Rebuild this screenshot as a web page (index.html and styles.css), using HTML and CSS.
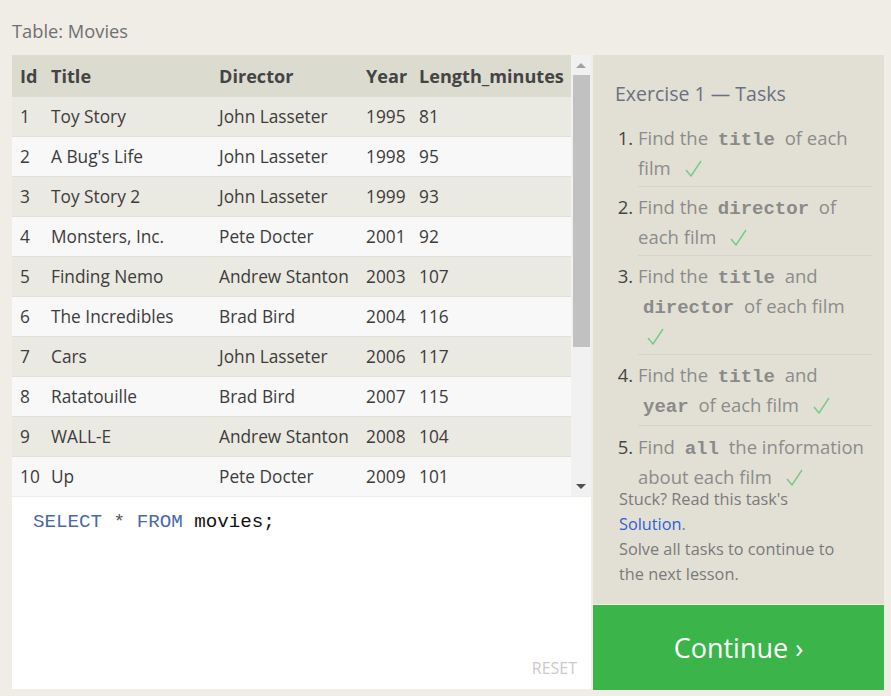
FILE: index.html
```html
<!DOCTYPE html>
<html>
<head>
<meta charset="utf-8">
<link rel="stylesheet" href="styles.css">
</head>
<body>
<div class="page">
  <div class="caption">Table: Movies</div>
  <div class="main">
    <div class="left">
      <div class="tablebox">
        <div class="tablewrap">
          <table class="data">
            <colgroup><col class="c1"><col class="c2"><col class="c3"><col class="c4"><col class="c5"></colgroup>
            <thead><tr><th>Id</th><th>Title</th><th>Director</th><th>Year</th><th>Length_minutes</th></tr></thead>
            <tbody>
              <tr><td>1</td><td>Toy Story</td><td>John Lasseter</td><td>1995</td><td>81</td></tr>
              <tr><td>2</td><td>A Bug's Life</td><td>John Lasseter</td><td>1998</td><td>95</td></tr>
              <tr><td>3</td><td>Toy Story 2</td><td>John Lasseter</td><td>1999</td><td>93</td></tr>
              <tr><td>4</td><td>Monsters, Inc.</td><td>Pete Docter</td><td>2001</td><td>92</td></tr>
              <tr><td>5</td><td>Finding Nemo</td><td>Andrew Stanton</td><td>2003</td><td>107</td></tr>
              <tr><td>6</td><td>The Incredibles</td><td>Brad Bird</td><td>2004</td><td>116</td></tr>
              <tr><td>7</td><td>Cars</td><td>John Lasseter</td><td>2006</td><td>117</td></tr>
              <tr><td>8</td><td>Ratatouille</td><td>Brad Bird</td><td>2007</td><td>115</td></tr>
              <tr><td>9</td><td>WALL-E</td><td>Andrew Stanton</td><td>2008</td><td>104</td></tr>
              <tr><td>10</td><td>Up</td><td>Pete Docter</td><td>2009</td><td>101</td></tr>
            </tbody>
          </table>
        </div>
        <div class="scrollbar">
          <div class="arrow up"></div>
          <div class="track"><div class="thumb"></div></div>
          <div class="arrow down"></div>
        </div>
      </div>
      <div class="editor">
        <div class="code"><span class="kw">SELECT</span> <span class="op">*</span> <span class="kw">FROM</span> movies;</div>
        <div class="reset">RESET</div>
      </div>
    </div>
    <div class="right">
      <div class="tasks">
        <h2 class="ex-title">Exercise 1 — Tasks</h2>
        <ol class="tasklist">
          <li>Find the <code>title</code> of each film <svg class="check" viewBox="0 0 17 17" width="17" height="17"><polyline points="1,10 6,16 16,1" /></svg></li>
          <li>Find the <code>director</code> of each film <svg class="check" viewBox="0 0 17 17" width="17" height="17"><polyline points="1,10 6,16 16,1" /></svg></li>
          <li>Find the <code>title</code> and <code>director</code> of each film <svg class="check" viewBox="0 0 17 17" width="17" height="17"><polyline points="1,10 6,16 16,1" /></svg></li>
          <li>Find the <code>title</code> and <code>year</code> of each film <svg class="check" viewBox="0 0 17 17" width="17" height="17"><polyline points="1,10 6,16 16,1" /></svg></li>
          <li>Find <code>all</code> the information about each film <svg class="check" viewBox="0 0 17 17" width="17" height="17"><polyline points="1,10 6,16 16,1" /></svg></li>
        </ol>
        <div class="help">
          Stuck? Read this task's <a class="link">Solution</a>.<br>
          Solve all tasks to continue to the next lesson.
        </div>
      </div>
      <div class="continue">Continue ›</div>
    </div>
  </div>
</div>
</body>
</html>
```
FILE: styles.css
```css
html, body {
  margin: 0;
  padding: 0;
  background: #efede6;
}
body {
  font-family: "Open Sans", "Noto Sans", sans-serif;
  width: 891px;
  height: 696px;
  overflow: hidden;
}
.page {
  padding: 18px 7px 0 12px;
}
.caption {
  font-size: 18.3px;
  color: #707070;
  line-height: 26px;
  height: 37px;
}
.main {
  display: flex;
  gap: 2px;
}
.left {
  width: 579px;
  display: flex;
  flex-direction: column;
  gap: 1px;
}
.tablebox {
  display: flex;
  height: 441px;
  background: #f8f8f8;
}
.tablewrap {
  width: 559px;
  overflow: hidden;
}
.data {
  width: 559px;
  table-layout: fixed;
  border-collapse: collapse;
  font-size: 17.3px;
  color: #3c3c3c;
}
.c1 { width: 39px; }
.c2 { width: 168px; }
.c3 { width: 147px; }
.c4 { width: 53px; }
.c5 { width: 152px; }
.data th {
  background: #dcdbd0;
  height: 42px;
  text-align: left;
  font-weight: 700;
  font-size: 18.1px;
  color: #444;
  padding: 0;
  white-space: nowrap;
}
.data td {
  height: 39px;
  padding: 0;
  border-bottom: 1px solid #e0dfd9;
  white-space: nowrap;
}
.data th:first-child, .data td:first-child {
  padding-left: 8px;
}
.data tbody tr:nth-child(odd) { background: #eae9e2; }
.data tbody tr:nth-child(even) { background: #f8f8f8; }
.scrollbar {
  width: 20px;
  background: #f1f1f1;
  display: flex;
  flex-direction: column;
  align-items: center;
}
.arrow {
  height: 20px;
  width: 17px;
  display: flex;
  align-items: center;
  justify-content: center;
}
.arrow.up::before {
  content: "";
  border-left: 5px solid transparent;
  border-right: 5px solid transparent;
  border-bottom: 5px solid #a3a3a3;
}
.arrow.down::before {
  content: "";
  border-left: 5px solid transparent;
  border-right: 5px solid transparent;
  border-top: 5px solid #505050;
}
.track {
  flex: 1;
  width: 17px;
}
.thumb {
  height: 272px;
  background: #c1c1c1;
}
.editor {
  background: #fff;
  height: 192px;
  display: flex;
  flex-direction: column;
  justify-content: space-between;
  padding: 12px 14px 10px 21px;
  box-sizing: border-box;
}
.code {
  font-family: "Liberation Mono", "DejaVu Sans Mono", monospace;
  font-size: 19.2px;
  line-height: 26px;
  color: #111;
}
.kw { color: #4a68ad; }
.op { color: #555; }
.reset {
  align-self: flex-end;
  font-size: 16px;
  color: #cacaca;
  line-height: 22px;
}
.right {
  width: 291px;
  display: flex;
  flex-direction: column;
}
.tasks {
  background: #e2e0d5;
  height: 549px;
  box-sizing: border-box;
  padding: 24px 12px 0 22px;
}
.ex-title {
  margin: 0;
  font-weight: 400;
  font-size: 19.5px;
  line-height: 30px;
  color: #6a7180;
}
.tasklist {
  margin: 14px 0 0 0;
  padding-left: 23px;
  font-size: 18.5px;
  line-height: 30px;
  color: #8c8c8c;
}
.tasklist li {
  padding: 0 0 3px 0;
  margin-bottom: 5px;
  border-bottom: 1px solid #d6d3c8;
}
.tasklist li:nth-child(4) {
  padding-bottom: 5px;
  margin-bottom: 6px;
}
.tasklist li:last-child {
  border-bottom: none;
  padding-bottom: 0;
  margin-bottom: 0;
}
.tasklist li::marker {
  color: #444;
}
.tasklist code {
  font-family: "Liberation Mono", "DejaVu Sans Mono", monospace;
  font-weight: 700;
  font-size: 19px;
  line-height: 1;
  color: #8a8a8a;
  margin: 0 5px;
}
.check {
  margin-left: 9px;
  vertical-align: -2px;
  fill: none;
  stroke: #7cc88a;
  stroke-width: 1.5;
}
.help {
  margin-top: -5px;
  font-size: 16.3px;
  line-height: 25px;
  color: #7a7a7a;
  padding-left: 4px;
  width: 226px;
}
.link {
  color: #2f5fd6;
}
.continue {
  height: 85px;
  margin-top: 1px;
  background: #3bb54a;
  color: #fff;
  font-size: 27px;
  display: flex;
  align-items: center;
  justify-content: center;
}
```
